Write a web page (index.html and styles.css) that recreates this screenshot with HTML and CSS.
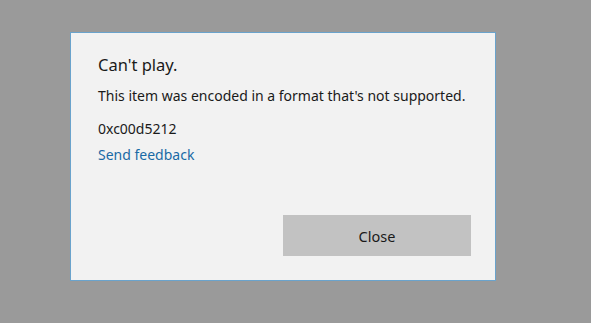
FILE: index.html
```html
<!DOCTYPE html>
<html>
<head>
<meta charset="utf-8">
<link rel="stylesheet" href="styles.css">
</head>
<body>
<div class="dialog">
  <div class="title">Can't play.</div>
  <div class="msg">This item was encoded in a format that's not supported.</div>
  <div class="code">0xc00d5212</div>
  <a class="link" href="#">Send feedback</a>
  <div class="actions">
    <button class="btn">Close</button>
  </div>
</div>
</body>
</html>
```
FILE: styles.css
```css
html, body {
  margin: 0;
  padding: 0;
  background: #9a9a9a;
  height: 100%;
}
body {
  padding: 32px 0 0 70px;
  box-sizing: border-box;
  font-family: "Noto Sans", "Open Sans", sans-serif;
  color: #1a1a1a;
}
.dialog {
  width: 426px;
  height: 249px;
  box-sizing: border-box;
  background: #f2f2f2;
  border: 1px solid #6aa3cc;
  padding: 20px 24px 0 27px;
  display: flex;
  flex-direction: column;
}
.title {
  font-size: 16.5px;
  line-height: 24px;
}
.msg {
  font-size: 14px;
  line-height: 20px;
  margin-top: 9px;
}
.code {
  font-size: 14px;
  line-height: 20px;
  margin-top: 13px;
}
.link {
  font-size: 14px;
  line-height: 20px;
  margin-top: 6px;
  color: #1a6aa5;
  text-decoration: none;
  align-self: flex-start;
}
.actions {
  display: flex;
  justify-content: flex-end;
  margin-top: 50px;
}
.btn {
  width: 188px;
  height: 41px;
  border: none;
  background: #c2c2c2;
  font-family: "Noto Sans", "Open Sans", sans-serif;
  font-size: 14.5px;
  color: #1a1a1a;
  padding: 0;
}
```
